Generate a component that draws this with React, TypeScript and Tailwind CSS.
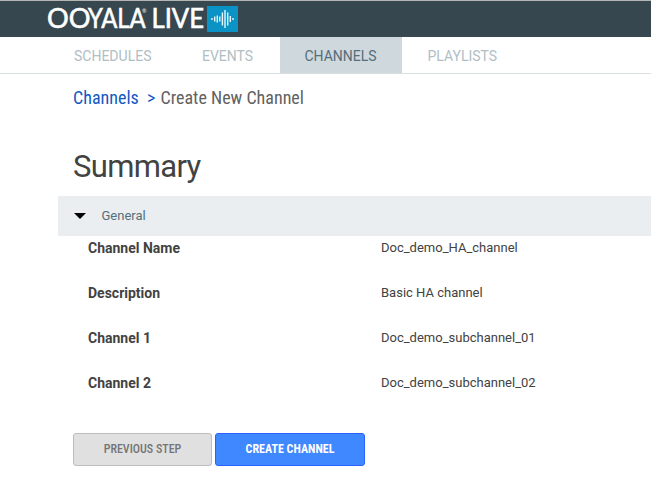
const tabs = [
  { label: 'SCHEDULES', box: 'w-[129px] pl-[24px]' },
  { label: 'EVENTS', box: 'w-[101px] pl-[23px]' },
  { label: 'CHANNELS', box: 'w-[122px] pl-[24.5px] bg-[#cfd8dd] text-[#546e7a]' },
  { label: 'PLAYLISTS', box: 'w-[120px] pl-[25.5px]' },
];

const rows = [
  ['Channel Name', 'Doc_demo_HA_channel'],
  ['Description', 'Basic HA channel'],
  ['Channel 1', 'Doc_demo_subchannel_01'],
  ['Channel 2', 'Doc_demo_subchannel_02'],
];

function Logo() {
  return (
    <svg className="ml-[46px] h-9 w-[194px]" viewBox="46 1 194 36" role="img" aria-label="Ooyala Live">
      <g fill="#fff" stroke="#fff" strokeWidth="0.6" fontFamily="Lato, sans-serif" fontSize="26">
        <text x="47" y="28" textLength="43.5" lengthAdjust="spacingAndGlyphs">OO</text>
        <text x="88" y="28" textLength="57.5" lengthAdjust="spacingAndGlyphs">YALA</text>
        <text x="151.5" y="28" textLength="52.5" lengthAdjust="spacingAndGlyphs">LIVE</text>
      </g>
      <text x="142" y="13" fontSize="5.5" fill="#fff" fontFamily="Lato, sans-serif">®</text>
      <rect x="207" y="6" width="31" height="26" fill="#0a93c4" />
      <path
        d="M212 18v2M214.7 16.5v5M217.3 15.5v7M219.8 16.5v5M222.4 12.5v13M225 10v18M227.7 12.5v13M230.3 16v6M233 18v2"
        stroke="#e8f7fc"
        strokeWidth="1.4"
      />
    </svg>
  );
}

export default function App() {
  return (
    <div className="h-[491px] w-[651px] overflow-hidden bg-white font-[Roboto,sans-serif] text-[#424242]">
      <header className="h-[37px] border-t border-[#b5b5b5] bg-[#37474f]">
        <Logo />
      </header>
      <nav className="flex h-[37px] border-b border-[#dadfe0] pl-[50px] text-sm leading-[38px] font-[450] text-[#b0bec5]">
        {tabs.map((t) => (
          <a key={t.label} className={`${t.box} h-9 shrink-0`}>{t.label}</a>
        ))}
      </nav>
      <main>
        <div className="flex h-12 pl-[73px] text-[18px] leading-[48px] font-[450] whitespace-pre [font-stretch:75%]">
          <a className="w-[74px] text-[#1259c3]">Channels</a>
          <span className="w-[13.5px] text-[#1259c3]">&gt;</span>
          <span className="text-[#616161]">Create New Channel</span>
        </div>
        <h1 className="h-[74px] pt-[26px] pl-[73px] text-[31px] leading-[38px] font-[430] tracking-[-0.65px]">Summary</h1>
        <section>
          <div className="ml-[58px] flex h-10 items-center bg-[#eaeef1] pl-4 text-[13px] text-[#546e7a]">
            <svg className="mr-[15.5px] h-1.5 w-3" viewBox="0 0 12 6"><path d="M0 0h12L6 6z" fill="#000" /></svg>
            General
          </div>
          <dl>
            {rows.map(([name, value]) => (
              <div key={name} className="flex h-[45px] pl-[88px]">
                <dt className="w-[293px] text-sm leading-6 font-bold">{name}</dt>
                <dd className="text-[13px] leading-[23px]">{value}</dd>
              </div>
            ))}
          </dl>
        </section>
        <div className="mt-[17px] flex gap-[3px] pl-[73px] text-[12px] [font-stretch:75%]">
          <button className="h-[33px] w-[139px] rounded-[3px] border border-[#bdbdbd] bg-[#e0e0e0] pb-0.5 font-medium text-[#757575]">PREVIOUS STEP</button>
          <button className="h-[33px] w-[150px] rounded-[3px] border border-[#2962ff] bg-[#4088ff] pb-0.5 font-bold text-white">CREATE CHANNEL</button>
        </div>
      </main>
    </div>
  );
}
